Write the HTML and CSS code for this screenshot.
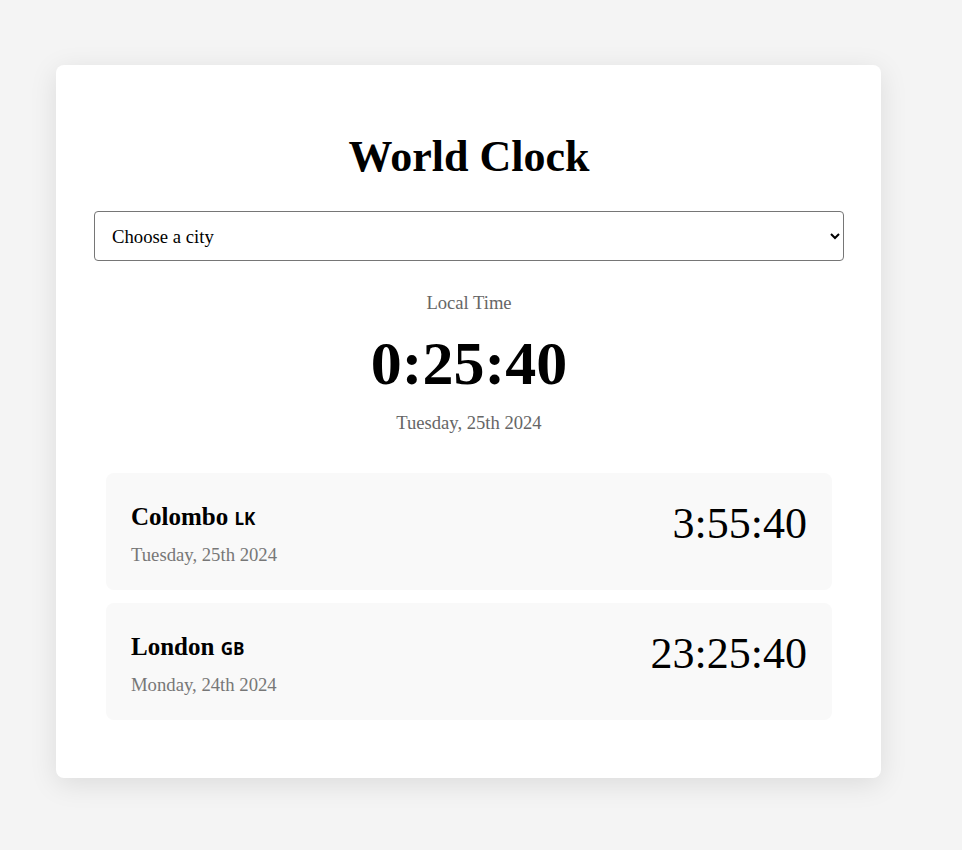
FILE: index.html
```html
<!DOCTYPE html>
<html lang="en">
<head>
<meta charset="utf-8">
<title>World Clock</title>
<link rel="stylesheet" href="styles.css">
</head>
<body>
<div class="page">
  <main class="card">
    <h1 class="title">World Clock</h1>
    <select class="city-select">
      <option>Choose a city</option>
      <option>Colombo</option>
      <option>London</option>
    </select>
    <section class="local">
      <div class="local-label">Local Time</div>
      <div class="local-time">0:25:40</div>
      <div class="local-date">Tuesday, 25th 2024</div>
    </section>
    <section class="cities">
      <div class="city">
        <div class="city-info">
          <div class="city-name">Colombo <span class="flag">LK</span></div>
          <div class="city-date">Tuesday, 25th 2024</div>
        </div>
        <div class="city-time">3:55:40</div>
      </div>
      <div class="city">
        <div class="city-info">
          <div class="city-name">London <span class="flag">GB</span></div>
          <div class="city-date">Monday, 24th 2024</div>
        </div>
        <div class="city-time">23:25:40</div>
      </div>
    </section>
  </main>
</div>
</body>
</html>
```
FILE: styles.css
```css
html, body {
  margin: 0;
  padding: 0;
}
body {
  background: #f4f4f4;
  font-family: "Liberation Serif", "Times New Roman", serif;
  color: #000;
}
.page {
  padding: 65px 0 72px 56px;
}
.card {
  width: 825px;
  box-sizing: border-box;
  background: #fff;
  border-radius: 8px;
  box-shadow: 0 6px 28px rgba(0, 0, 0, 0.1);
  padding: 67px 37px 58px 38px;
}
.title {
  margin: 0 0 29px;
  font-size: 44px;
  font-weight: bold;
  text-align: center;
  line-height: 50px;
}
.city-select {
  display: block;
  width: 100%;
  height: 50px;
  box-sizing: border-box;
  padding: 0 13px;
  font-family: "Liberation Serif", "Times New Roman", serif;
  font-size: 18.7px;
  color: #000;
  background: #fff;
  border: 1px solid #767676;
  border-radius: 4px;
}
.local {
  margin-top: 31px;
  text-align: center;
}
.local-label {
  font-size: 18.6px;
  color: #666;
  line-height: 22px;
}
.local-time {
  font-size: 62px;
  font-weight: bold;
  line-height: 76px;
  margin-top: 11px;
}
.local-date {
  font-size: 18.6px;
  color: #666;
  line-height: 22px;
  margin-top: 11px;
}
.cities {
  margin: 39px 12px 0;
  display: flex;
  flex-direction: column;
  gap: 13px;
}
.city {
  display: flex;
  justify-content: space-between;
  align-items: flex-start;
  background: #f9f9f9;
  border-radius: 8px;
  height: 117px;
  box-sizing: border-box;
  padding: 24px 25px;
}
.city-info {
  padding-top: 5px;
}
.city-name {
  font-size: 25px;
  font-weight: bold;
  line-height: 30px;
}
.flag {
  font-family: "Open Sans", "Noto Sans", sans-serif;
  font-size: 17px;
  font-weight: 700;
}
.city-date {
  margin-top: 10px;
  font-size: 18.7px;
  color: #777;
  line-height: 22px;
}
.city-time {
  padding-top: 2px;
  font-size: 44px;
  line-height: 50px;
}
```
